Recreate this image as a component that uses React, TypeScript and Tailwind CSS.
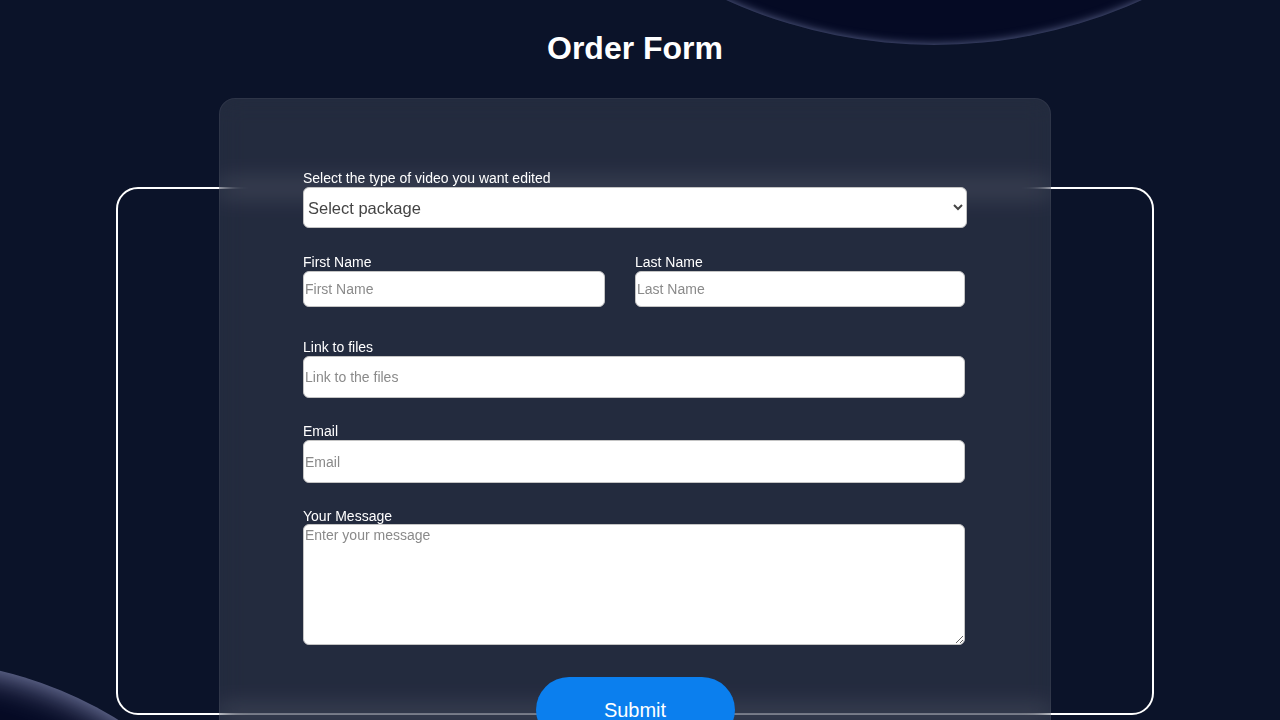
import { useState } from "react";

const font = "font-['Liberation_Sans',Arial,sans-serif]";

const inputClass =
  "block rounded-md border border-[#c4c4c4] bg-white px-[1px] text-sm text-[#222] placeholder:text-[#8a8a8a] outline-none";

function Field({
  label,
  className = "",
  children,
}: {
  label: string;
  className?: string;
  children: React.ReactNode;
}) {
  return (
    <div className={className}>
      <label className="block text-sm leading-4 text-white">{label}</label>
      {children}
    </div>
  );
}

export default function App() {
  const [pkg, setPkg] = useState("");

  return (
    <div
      className={`relative min-h-screen overflow-hidden bg-[#0b1329] pb-10 ${font}`}
    >
      {/* Decorative circles */}
      <div className="absolute left-[431px] top-[-961px] h-[1006px] w-[1006px] rounded-full bg-[#050a24] shadow-[inset_0_0_10px_rgba(130,140,185,0.75)]" />
      <div className="absolute left-[-492px] top-[660px] h-[800px] w-[800px] rounded-full bg-[#050a24] shadow-[inset_0_0_36px_rgba(155,162,205,1)]" />

      <div className="relative w-[1270px]">
        {/* Header */}
        <h1 className="pt-[30px] text-center text-[32px] font-bold leading-[37px] text-white">
          Order Form
        </h1>

        {/* Workspace */}
        <div className="relative mx-auto mt-[31px] w-[832px]">
          {/* Outline frame behind the card */}
          <div className="absolute left-[-103px] top-[89px] h-[528px] w-[1038px] rounded-[22px] border-2 border-white" />

          <form
            className="relative rounded-2xl border border-white/5 bg-white/10 px-[83px] pb-10 pt-[71px] backdrop-blur-md"
            onSubmit={(e) => e.preventDefault()}
          >
            <Field label="Select the type of video you want edited">
              <select
                value={pkg}
                onChange={(e) => setPkg(e.target.value)}
                className="mt-px block h-[41px] w-[664px] rounded-md border border-[#c4c4c4] bg-white pl-0 pr-1 text-[16.5px] text-[#444] outline-none"
              >
                <option value="">Select package</option>
                <option value="basic">Basic</option>
                <option value="standard">Standard</option>
                <option value="premium">Premium</option>
              </select>
            </Field>

            <div className="mt-[26px] flex gap-[30px]">
              <Field label="First Name">
                <input
                  className={`${inputClass} mt-px h-[36px] w-[302px]`}
                  placeholder="First Name"
                />
              </Field>
              <Field label="Last Name">
                <input
                  className={`${inputClass} mt-px h-[36px] w-[330px]`}
                  placeholder="Last Name"
                />
              </Field>
            </div>

            <Field label="Link to files" className="mt-[32px]">
              <input
                className={`${inputClass} mt-px h-[42px] w-[662px]`}
                placeholder="Link to the files"
              />
            </Field>

            <Field label="Email" className="mt-[25px]">
              <input
                type="email"
                className={`${inputClass} mt-px h-[43px] w-[662px]`}
                placeholder="Email"
              />
            </Field>

            <Field label="Your Message" className="mt-[25px]">
              <textarea
                className={`${inputClass} h-[121px] w-[662px] py-0 leading-5`}
                placeholder="Enter your message"
              />
            </Field>

            <div className="mt-[32px] flex justify-center">
              <button
                type="submit"
                className="h-[66px] w-[199px] rounded-full bg-[#0b7fee] text-xl text-white"
              >
                Submit
              </button>
            </div>
          </form>
        </div>
      </div>
    </div>
  );
}
